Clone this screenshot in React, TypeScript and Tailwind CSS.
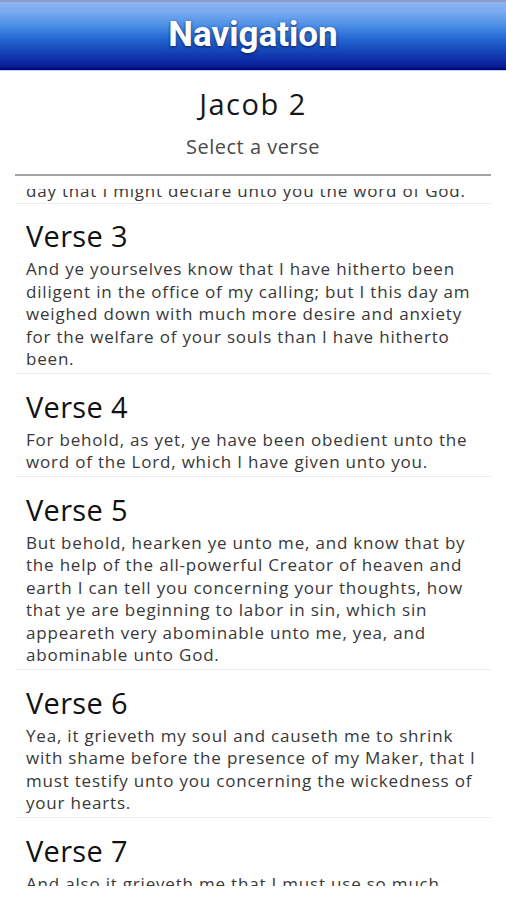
import React from 'react';

// Jacob 2 verses shown in the list
const verses = [
  { num: 3, text: "And ye yourselves know that I have hitherto been diligent in the office of my calling; but I this day am weighed down with much more desire and anxiety for the welfare of your souls than I have hitherto been." },
  { num: 4, text: "For behold, as yet, ye have been obedient unto the word of the Lord, which I have given unto you." },
  { num: 5, text: "But behold, hearken ye unto me, and know that by the help of the all-powerful Creator of heaven and earth I can tell you concerning your thoughts, how that ye are beginning to labor in sin, which sin appeareth very abominable unto me, yea, and abominable unto God." },
  { num: 6, text: "Yea, it grieveth my soul and causeth me to shrink with shame before the presence of my Maker, that I must testify unto you concerning the wickedness of your hearts." },
  { num: 7, text: "And also it grieveth me that I must use so much boldness of speech concerning you, before your wives and your children, many of whose feelings are exceedingly tender and chaste and delicate before God, which thing is pleasing unto God;" },
];

const VerseItem: React.FC<{ num: number; text: string }> = ({ num, text }) => (
  <div className="border-b border-[#ececec] px-[11px] pt-[15.5px] pb-[2.5px]">
    <h3 className="text-[29px] leading-[34px] tracking-[0.3px] text-[#111]">Verse {num}</h3>
    <p className="mt-[5px] text-[17px] leading-[22.5px] tracking-[0.8px] text-[#383838]">{text}</p>
  </div>
);

export default function App() {
  return (
    <div className="h-[900px] w-[506px] overflow-hidden bg-white font-['Open_Sans',sans-serif]">
      {/* --- Title bar --- */}
      <header className="border-t-2 border-t-[#8d9cc6] border-b-2 border-b-[#00087a] bg-[linear-gradient(to_bottom,#8cb4f2_0%,#7cacf0_14%,#4a8ee6_36%,#2468d4_55%,#1444b6_75%,#0a26a0_92%,#08188e_100%)] h-[70px] flex items-center justify-center">
        <h1 className="font-['Roboto',sans-serif] text-[35px] font-bold text-white [text-shadow:0_1px_3px_rgba(0,0,40,0.7)]">Navigation</h1>
      </header>
      <div className="h-px bg-[#c9cdf0]" />

      {/* --- Chapter heading --- */}
      <div className="flex flex-col items-center pt-[16px]">
        <h2 className="text-[29px] leading-[34px] tracking-[1.5px] text-[#161616]">Jacob 2</h2>
        <p className="mt-[14px] text-[20px] leading-[24px] tracking-[0.5px] text-[#4a4a4a]">Select a verse</p>
      </div>
      <div className="mx-[15px] mt-[15px] h-[2px] bg-[#a3a3a3]" />

      {/* --- Verse list (scrolled) --- */}
      <div className="mx-[15px] mt-[13px] h-[697px] overflow-hidden">
        <div className="-mt-[9px] border-b border-[#ececec] px-[11px]">
          <p className="text-[17px] leading-[22.5px] tracking-[0.8px] text-[#383838] whitespace-nowrap">day that I might declare unto you the word of God.</p>
        </div>
        {verses.map((v) => (
          <VerseItem key={v.num} num={v.num} text={v.text} />
        ))}
      </div>
    </div>
  );
}
